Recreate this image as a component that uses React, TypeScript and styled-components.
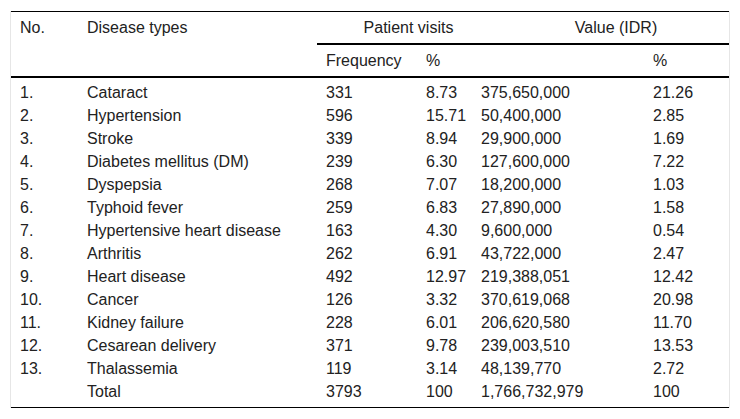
import React from 'react';
import styled, { createGlobalStyle } from 'styled-components';

const GlobalStyle = createGlobalStyle`
  body {
    margin: 0;
    background: #ffffff;
    font-family: 'Liberation Sans', Arial, sans-serif;
    color: #222222;
  }
`;

const Frame = styled.div`
  margin: 11px 0 0 10px;
  width: 718px;
  border-left: 1px solid #e6e6e6;
  border-right: 1px solid #e6e6e6;
`;

const Table = styled.table`
  width: 718px;
  table-layout: fixed;
  border-collapse: collapse;
  border-top: 1px solid #000;
  border-bottom: 1px solid #000;
  font-size: 16px;
  line-height: 17px;
`;

const HeadCell = styled.th<{ $center?: boolean; $shift?: number; $rule?: boolean }>`
  font-weight: normal;
  text-align: ${(p) => (p.$center ? 'center' : 'left')};
  vertical-align: top;
  padding: 7px 0 7px ${(p) => p.$shift ?? 9}px;
  border-bottom: ${(p) => (p.$rule ? '2px solid #000' : 'none')};
`;

const Cell = styled.td<{ $first?: boolean; $last?: boolean }>`
  padding: ${(p) => (p.$first ? 6 : 3)}px 0 ${(p) => (p.$last ? 7 : 3)}px 9px;
  white-space: nowrap;
`;

const rows: string[][] = [
  ['1.', 'Cataract', '331', '8.73', '375,650,000', '21.26'],
  ['2.', 'Hypertension', '596', '15.71', '50,400,000', '2.85'],
  ['3.', 'Stroke', '339', '8.94', '29,900,000', '1.69'],
  ['4.', 'Diabetes mellitus (DM)', '239', '6.30', '127,600,000', '7.22'],
  ['5.', 'Dyspepsia', '268', '7.07', '18,200,000', '1.03'],
  ['6.', 'Typhoid fever', '259', '6.83', '27,890,000', '1.58'],
  ['7.', 'Hypertensive heart disease', '163', '4.30', '9,600,000', '0.54'],
  ['8.', 'Arthritis', '262', '6.91', '43,722,000', '2.47'],
  ['9.', 'Heart disease', '492', '12.97', '219,388,051', '12.42'],
  ['10.', 'Cancer', '126', '3.32', '370,619,068', '20.98'],
  ['11.', 'Kidney failure', '228', '6.01', '206,620,580', '11.70'],
  ['12.', 'Cesarean delivery', '371', '9.78', '239,003,510', '13.53'],
  ['13.', 'Thalassemia', '119', '3.14', '48,139,770', '2.72'],
  ['', 'Total', '3793', '100', '1,766,732,979', '100'],
];

const widths = [67, 239, 100, 55, 172, 85];

export default function App() {
  return (
    <>
      <GlobalStyle />
      <Frame>
        <Table>
          <colgroup>
            {widths.map((w, i) => (
              <col key={i} style={{ width: w }} />
            ))}
          </colgroup>
          <thead>
            <tr>
              <HeadCell rowSpan={2} $rule>No.</HeadCell>
              <HeadCell rowSpan={2} $rule>Disease types</HeadCell>
              <HeadCell colSpan={2} $center $shift={28} $rule>Patient visits</HeadCell>
              <HeadCell colSpan={2} $center $shift={31} $rule>Value (IDR)</HeadCell>
            </tr>
            <tr>
              <HeadCell $rule>Frequency</HeadCell>
              <HeadCell $rule>%</HeadCell>
              <HeadCell $rule></HeadCell>
              <HeadCell $rule>%</HeadCell>
            </tr>
          </thead>
          <tbody>
            {rows.map((r, i) => (
              <tr key={i}>
                {r.map((c, j) => (
                  <Cell key={j} $first={i === 0} $last={i === rows.length - 1}>
                    {c}
                  </Cell>
                ))}
              </tr>
            ))}
          </tbody>
        </Table>
      </Frame>
    </>
  );
}
